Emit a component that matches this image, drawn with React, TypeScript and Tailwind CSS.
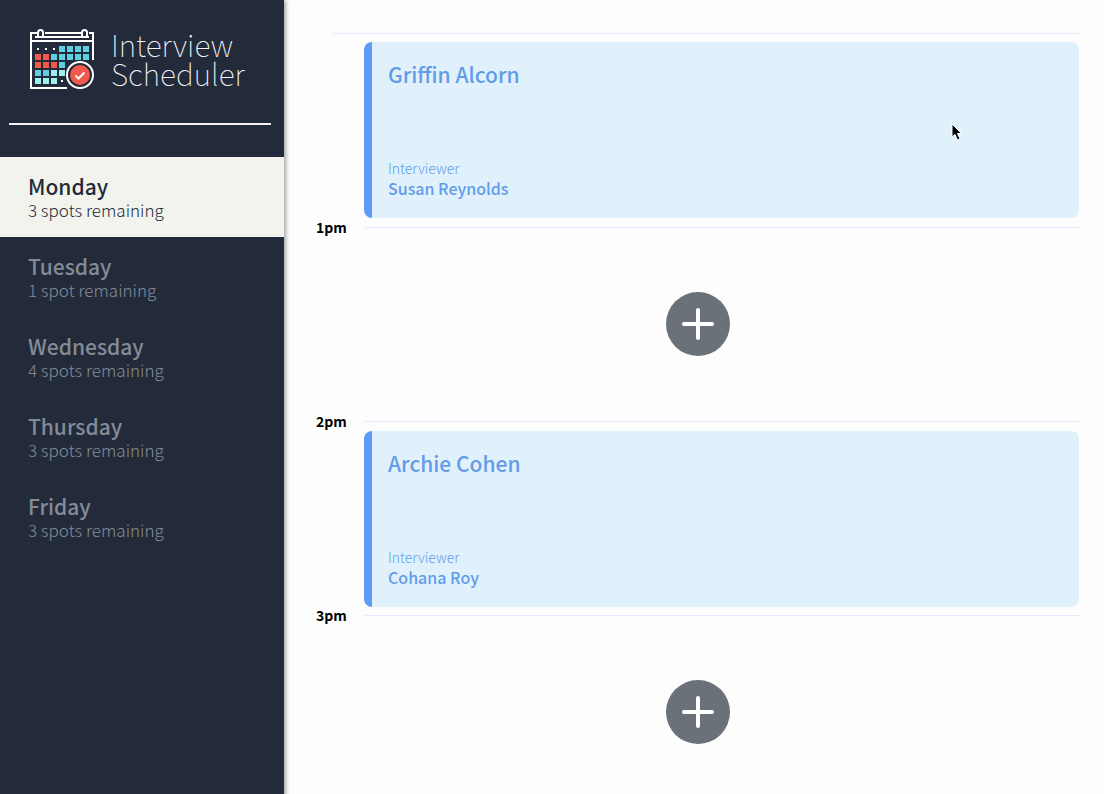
const days = [
  { name: "Monday", spots: "3 spots remaining", selected: true },
  { name: "Tuesday", spots: "1 spot remaining" },
  { name: "Wednesday", spots: "4 spots remaining" },
  { name: "Thursday", spots: "3 spots remaining" },
  { name: "Friday", spots: "3 spots remaining" },
];

const slots = [
  { time: "12pm", student: "Griffin Alcorn", interviewer: "Susan Reynolds" },
  { time: "1pm" },
  { time: "2pm", student: "Archie Cohen", interviewer: "Cohana Roy" },
  { time: "3pm" },
];

const RED = "#f2594b";
const TEAL = "#5fd0e0";
const PALE = "#9cf0f0";
const cells = [
  [null, null, null, TEAL, TEAL, TEAL, TEAL],
  [RED, RED, TEAL, TEAL, TEAL, TEAL, TEAL],
  [RED, RED, RED, TEAL],
  [TEAL, TEAL, PALE, PALE],
  [PALE, PALE, PALE, null],
];

function CalendarLogo() {
  return (
    <svg width="66" height="62" viewBox="0 0 66 62" fill="none" className="shrink-0" aria-hidden="true">
      <g stroke="#fff" strokeWidth="2">
        <path d="M38 60H2V5H8M16 5H52M60 5H64V32M2 13H64M6 9H60" />
        <path d="M9 9V4.500a2.500 2.500 0 0 1 5 0V9M53 9V4.500a2.500 2.500 0 0 1 5 0V9" />
      </g>
      {cells.map((row, r) =>
        row.map((c, i) =>
          c ? (
            <rect key={`${r}-${i}`} x={6 + i * 8} y={18 + r * 8} width="6" height="6" fill={c} />
          ) : (
            <rect key={`${r}-${i}`} x={8 + i * 8} y={20 + r * 8} width="2" height="2" fill="#fff" />
          )
        )
      )}
      <circle cx="51" cy="47" r="13" fill="#232b3a" stroke="#fff" strokeWidth="2" />
      <circle cx="51" cy="47" r="10" fill={RED} />
      <path d="M46.500 47.500l3 3 6-6" stroke="#fff" strokeWidth="2" />
    </svg>
  );
}

function Appointment({ student, interviewer }: { student: string; interviewer: string }) {
  return (
    <article className="flex h-44 flex-col justify-between rounded-lg border-l-8 border-[#5a9cf8] bg-[#e0f1fc] px-4 pt-4 pb-5 text-[#629ce8]">
      <h2 className="text-[21px] leading-8 font-medium">{student}</h2>
      <div>
        <h4 className="text-[14px] leading-5 font-light">Interviewer</h4>
        <h3 className="text-[16px] leading-5 font-medium">{interviewer}</h3>
      </div>
    </article>
  );
}

export default function App() {
  return (
    <main className="relative flex min-h-screen bg-[#fdfdfd] font-['Noto_Sans_CJK_JP',sans-serif]">
      <aside className="w-[284px] shrink-0 bg-[#232b3a] shadow-[2px_0_4px_rgba(0,0,0,0.35)]">
        <div className="flex h-[123px] items-start gap-4 px-[29px] pt-7">
          <CalendarLogo />
          <h1 className="pt-0.5 text-[30px] leading-[29px] font-thin text-[#f4f4f8]">
            Interview
            <br />
            Scheduler
          </h1>
        </div>
        <hr className="mr-[13px] ml-[9px] border-t-2 border-[#f4f4f8]" />
        <nav className="pt-8">
          <ul>
            {days.map((d) => (
              <li key={d.name}>
                <button
                  type="button"
                  className={
                    d.selected
                      ? "flex h-20 w-full flex-col justify-center bg-[#f3f3ed] px-7 pt-0.5 text-left text-[#232b3a]"
                      : "flex h-20 w-full flex-col justify-center px-7 pt-0.5 text-left text-[#838b98]"
                  }
                >
                  <span className="text-[21px] leading-6 font-medium">{d.name}</span>
                  <span className="text-[17px] leading-6 font-light">{d.spots}</span>
                </button>
              </li>
            ))}
          </ul>
        </nav>
      </aside>
      <section className="min-w-0 flex-1 pt-[33px] pr-[25px] pl-8">
        {slots.map((s, i) => (
          <div key={s.time} className={i === 0 ? "h-[184px]" : "h-[194px]"}>
            {i === 0 ? (
              <hr className="ml-4 border-t border-dotted border-[#d5d5ee]" />
            ) : (
              <header className="flex h-5 items-center">
                <h4 className="w-12 text-[14px] font-bold text-black">{s.time}</h4>
                <hr className="flex-1 border-t border-dotted border-[#d5d5ee]" />
              </header>
            )}
            {s.student ? (
              <div className={i === 0 ? "pt-2 pl-12" : "pl-12"}>
                <Appointment student={s.student} interviewer={s.interviewer} />
              </div>
            ) : (
              <div className="flex h-[174px] items-center justify-center">
                <button type="button" aria-label={`Book ${s.time}`} className="flex size-16 items-center justify-center rounded-full bg-[#6b7178]">
                  <svg width="32" height="32" viewBox="0 0 32 32" stroke="#fff" strokeWidth="4" strokeLinecap="round" aria-hidden="true">
                    <path d="M16 2V30M2 16H30" />
                  </svg>
                </button>
              </div>
            )}
          </div>
        ))}
      </section>
      <svg className="pointer-events-none absolute top-[123px] left-[951px]" width="12" height="19" viewBox="0 0 12 19" aria-hidden="true">
        <path d="M1 1V14L4 11.500L6.500 17L9 16L6.500 10.500H10.500Z" fill="#000" stroke="#fff" strokeWidth="1" />
      </svg>
    </main>
  );
}
